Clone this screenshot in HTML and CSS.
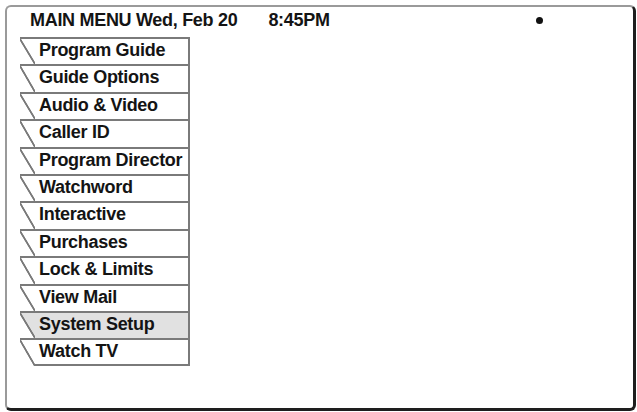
FILE: index.html
```html
<!DOCTYPE html>
<html>
<head>
    <title>Main Menu</title>
    <link rel="stylesheet" href="styles.css">
</head>
<body>
    <div class="screen">
        <div class="header">
            <span class="title">MAIN MENU Wed, Feb 20</span>
            <span class="clock">8:45PM</span>
            <span class="dot"></span>
        </div>

        <ul class="menu">
            <li>Program Guide</li>
            <li>Guide Options</li>
            <li>Audio &amp; Video</li>
            <li>Caller ID</li>
            <li>Program Director</li>
            <li>Watchword</li>
            <li>Interactive</li>
            <li>Purchases</li>
            <li>Lock &amp; Limits</li>
            <li>View Mail</li>
            <li class="selected">System Setup</li>
            <li>Watch TV</li>
        </ul>
    </div>
</body>
</html>
```

FILE: styles.css
```css
body {
    margin: 0;
    background: #fff;
    font-family: "Liberation Sans", Arial, sans-serif;
    color: #141414;
}
.screen {
    box-sizing: border-box;
    width: 631px;
    height: 406px;
    margin: 5px 0 0 5px;
    border: 2px solid #9a9a9a;
    border-right: 3px solid #1e1e1e;
    border-bottom: 3px solid #1e1e1e;
    border-radius: 6px;
}
.header {
    display: flex;
    align-items: center;
    padding: 3px 0 0 23px;
    height: 20px;
    font-size: 18px;
    font-weight: bold;
    letter-spacing: -0.3px;
    line-height: 20px;
}
.clock {
    margin-left: 31px;
}
.dot {
    width: 7px;
    height: 7px;
    border-radius: 50%;
    background: #111;
    margin: 0 90px 0 auto;
}
.menu {
    list-style: none;
    margin: 7px 0 0 13px;
    padding: 0;
    width: 170px;
}
.menu li {
    box-sizing: border-box;
    height: 27.4px;
    padding-left: 19px;
    border-top: 2px solid #7a7a7a;
    border-right: 2px solid #7a7a7a;
    font-size: 18px;
    font-weight: bold;
    letter-spacing: -0.3px;
    line-height: 23px;
    white-space: nowrap;
    /* slanted left edge of the tab */
    background: linear-gradient(to top right, transparent calc(50% - 1.3px), #7a7a7a calc(50% - 0.6px), #7a7a7a calc(50% + 0.6px), transparent calc(50% + 1.3px)) left top / 15px 100% no-repeat;
}
.menu li.selected {
    background:
        linear-gradient(to top right, transparent calc(50% - 1.3px), #7a7a7a calc(50% - 0.6px), #7a7a7a calc(50% + 0.6px), transparent calc(50% + 1.3px)) left top / 15px 100% no-repeat,
        linear-gradient(to top right, transparent 50%, #e1e1e1 50%) left top / 15px 100% no-repeat,
        linear-gradient(#e1e1e1, #e1e1e1) 15px 0 / calc(100% - 15px) 100% no-repeat;
}
.menu li:last-child {
    background:
        linear-gradient(to top right, transparent calc(50% - 1.3px), #7a7a7a calc(50% - 0.6px), #7a7a7a calc(50% + 0.6px), transparent calc(50% + 1.3px)) left top / 15px 100% no-repeat,
        linear-gradient(#7a7a7a, #7a7a7a) 15px 100% / calc(100% - 15px) 2px no-repeat;
}
```
